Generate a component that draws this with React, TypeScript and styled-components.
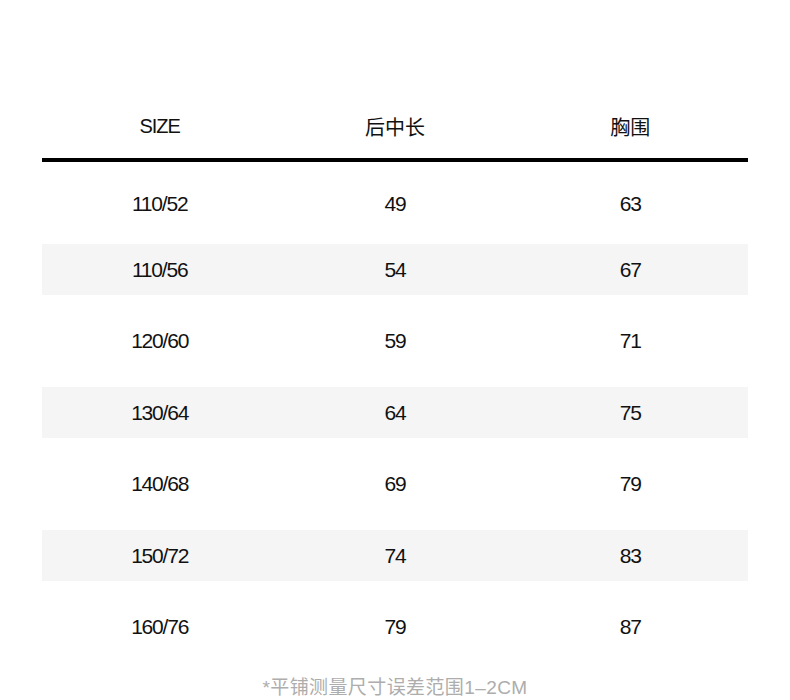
import React, { FC } from "react";
import styled, { createGlobalStyle } from "styled-components";

const GlobalStyle = createGlobalStyle`
  html, body {
    margin: 0;
    padding: 0;
    background: #fff;
  }
  body {
    font-family: "Liberation Sans", "Noto Sans CJK SC", sans-serif;
    color: #111;
  }
`;

const Page = styled.div`
  width: 790px;
  height: 700px;
  overflow: hidden;
  padding: 94px 42px 0 42px;
  box-sizing: border-box;
`;

const HeadRow = styled.div`
  display: grid;
  grid-template-columns: repeat(3, 1fr);
  height: 64px;
  border-bottom: 4px solid #000;
`;

const HeadCell = styled.div<{ $latin?: boolean }>`
  display: flex;
  align-items: center;
  justify-content: center;
  font-size: 20px;
  letter-spacing: ${(p) => (p.$latin ? "-1px" : "0")};
  font-family: "Liberation Sans", "Noto Sans CJK SC", sans-serif;
`;

const Body = styled.div`
  display: flex;
  flex-direction: column;
`;

const Row = styled.div<{ $striped?: boolean }>`
  display: grid;
  grid-template-columns: repeat(3, 1fr);
  height: ${(p) => (p.$striped ? "51px" : "92px")};
  background: ${(p) => (p.$striped ? "#f5f5f5" : "transparent")};

  &:first-child {
    height: 82px;
    padding-top: 1px;
    box-sizing: border-box;
  }
`;

const Cell = styled.div`
  display: flex;
  align-items: center;
  justify-content: center;
  font-size: 21px;
  letter-spacing: -1.2px;
`;

const Note = styled.div`
  margin-top: 3px;
  text-align: center;
  font-size: 19px;
  line-height: 24px;
  letter-spacing: 0.4px;
  color: #adadad;
  font-family: "Liberation Sans", "Noto Sans CJK SC", sans-serif;
`;

const rows = [
  ["110/52", "49", "63"],
  ["110/56", "54", "67"],
  ["120/60", "59", "71"],
  ["130/64", "64", "75"],
  ["140/68", "69", "79"],
  ["150/72", "74", "83"],
  ["160/76", "79", "87"],
];

const App: FC = () => {
  return (
    <>
      <GlobalStyle />
      <Page>
        <HeadRow>
          <HeadCell $latin>SIZE</HeadCell>
          <HeadCell>后中长</HeadCell>
          <HeadCell>胸围</HeadCell>
        </HeadRow>
        <Body>
          {rows.map((r, i) => (
            <Row key={r[0]} $striped={i % 2 === 1}>
              {r.map((v, j) => (
                <Cell key={j}>{v}</Cell>
              ))}
            </Row>
          ))}
        </Body>
        <Note>*平铺测量尺寸误差范围1–2CM</Note>
      </Page>
    </>
  );
};

export default App;
